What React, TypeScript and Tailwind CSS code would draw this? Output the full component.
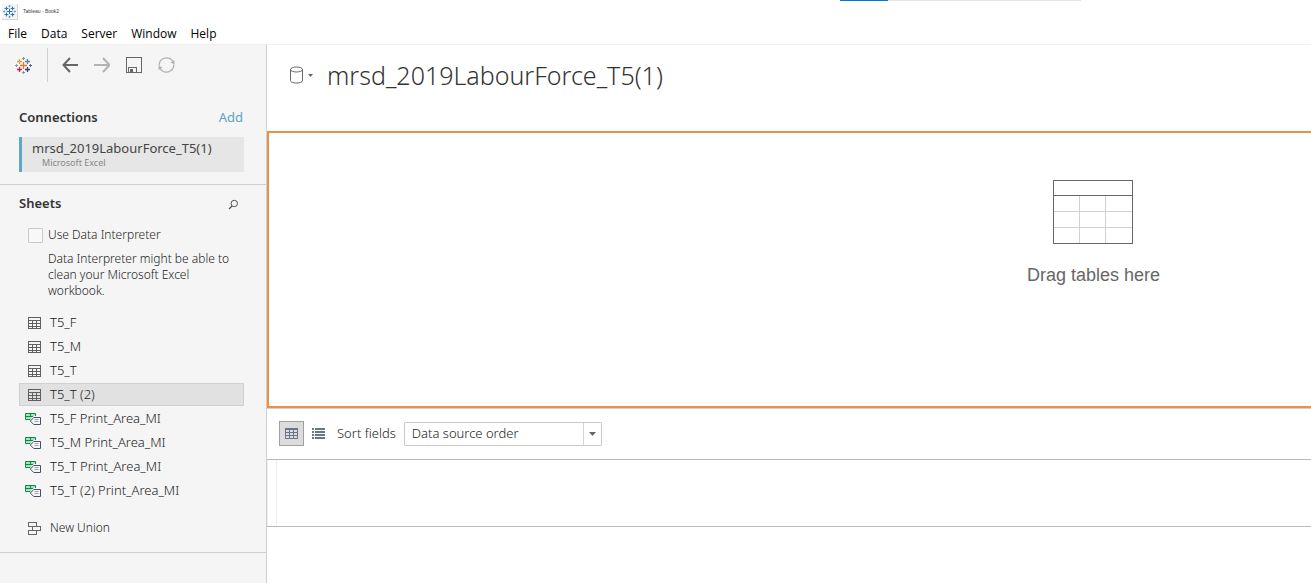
import React from "react";

const menus = ["File", "Data", "Server", "Window", "Help"];

const sheets = [
  { name: "T5_F", kind: "sheet" },
  { name: "T5_M", kind: "sheet" },
  { name: "T5_T", kind: "sheet" },
  { name: "T5_T (2)", kind: "sheet", selected: true },
  { name: "T5_F Print_Area_MI", kind: "range" },
  { name: "T5_M Print_Area_MI", kind: "range" },
  { name: "T5_T Print_Area_MI", kind: "range" },
  { name: "T5_T (2) Print_Area_MI", kind: "range" },
];

function TableauLogo({ colors, size }: { colors: string[]; size: number }) {
  const [center, tl, tr, bl, br, left, right, top, bottom] = colors;
  return (
    <svg width={size} height={size} viewBox="0 0 17 17" fill="none" aria-hidden="true">
      <path d="M8.5 5v7M5 8.5h7" stroke={center} strokeWidth="1.3" />
      <path d="M4.5 2v5M2 4.5h5" stroke={tl} strokeWidth="1.3" />
      <path d="M12.5 2v5M10 4.5h5" stroke={tr} strokeWidth="1.3" />
      <path d="M4.5 10v5M2 12.5h5" stroke={bl} strokeWidth="1.3" />
      <path d="M12.5 10v5M10 12.5h5" stroke={br} strokeWidth="1.3" />
      <path d="M1.5 7v3M0 8.5h3" stroke={left} />
      <path d="M15.5 7v3M14 8.5h3" stroke={right} />
      <path d="M8.5 0v3M7 1.5h3" stroke={top} />
      <path d="M8.5 14v3M7 15.5h3" stroke={bottom} />
    </svg>
  );
}

function SheetIcon() {
  return (
    <svg width="13" height="12" viewBox="0 0 13 12" fill="none" stroke="#5f5f5f" shapeRendering="crispEdges" aria-hidden="true">
      <path d="M.5 .5h12v11H.5zM0 3.5h13M0 6.5h13M0 9.5h13M4.5 3v9M8.5 3v9" />
    </svg>
  );
}

function RangeIcon() {
  return (
    <svg width="17" height="12" viewBox="0 0 17 12" fill="none" aria-hidden="true">
      <path d="M.5 .5h10v6H.5z" fill="#a5e6c0" stroke="#16824a" />
      <path d="M0 3.5h11M5.500 0v4" stroke="#16824a" />
      <path d="M8.500 3H17v9H8L4 8z" fill="#f5f5f5" />
      <path d="M8.800 4.500h6.700v7H8.800L5.300 8z" fill="#f8f8fa" stroke="#454f66" strokeLinejoin="round" />
      <path d="M9.500 6.500h4M9.500 8.500h4" stroke="#9aa0ac" />
    </svg>
  );
}

export default function App() {
  return (
    <div className="flex min-h-screen flex-col overflow-hidden bg-white font-['Noto_Sans',sans-serif] font-light text-[#222]">
      <div className="flex h-px justify-end pr-[230px]">
        <span className="w-12 bg-[#0078d7]" />
        <span className="w-[193px] bg-[#e5e5e5]" />
      </div>
      <header className="border-b border-[#f0f0f0]">
        <div className="flex h-[22px] items-center gap-[5px] pl-[2px]">
          <span className="flex size-4 items-center justify-center border-r border-b border-[#d5d5d5] bg-[#f3f5f7]">
            <TableauLogo
              size={13}
              colors={["#2674a8", "#2674a8", "#2674a8", "#2674a8", "#2674a8", "#5590b5", "#5590b5", "#5590b5", "#5590b5"]}
            />
          </span>
          <span className="font-['Liberation_Sans',sans-serif] text-[5px] font-normal text-[#444]">Tableau - Book2</span>
        </div>
        <nav className="flex h-[21px] items-center gap-[14px] pl-2 font-['Open_Sans',sans-serif] text-[12px] font-normal text-black">
          {menus.map((m) => (
            <button key={m} type="button">
              {m}
            </button>
          ))}
        </nav>
      </header>

      <div className="flex flex-1">
        <aside className="w-[267px] shrink-0 border-r border-[#d0d0d0] bg-[#f5f5f5]">
          <div className="flex h-10 items-center pl-[15px]">
            <button type="button" aria-label="Start page">
              <TableauLogo
                size={17}
                colors={["#e8762b", "#e8a33d", "#5b879b", "#c9203f", "#1f447e", "#6fa3b5", "#59659b", "#7199a6", "#8a93ad"]}
              />
            </button>
            <span className="ml-[15px] h-[34px] w-px bg-[#d0d0d0]" />
            <div className="flex items-center gap-4 pl-[14px]">
              <button type="button" aria-label="Back">
                <svg width="16" height="16" viewBox="0 0 16 16" fill="none" stroke="#666" strokeWidth="2" aria-hidden="true">
                  <path d="M16 8H1.500M8 1L1.500 8L8 15" />
                </svg>
              </button>
              <button type="button" aria-label="Forward">
                <svg width="16" height="16" viewBox="0 0 16 16" fill="none" stroke="#b3b3b3" strokeWidth="2" aria-hidden="true">
                  <path d="M0 8h15.500M9 1l6.500 7L9 15" />
                </svg>
              </button>
              <button type="button" aria-label="Save">
                <svg width="16" height="16" viewBox="0 0 16 16" fill="none" stroke="#666" shapeRendering="crispEdges" aria-hidden="true">
                  <path d="M.5 .5h15v15H.5zM2.500 15v-4.500h8V15" />
                  <path d="M4 12h3v3H4z" fill="#666" stroke="none" />
                </svg>
              </button>
              <button type="button" aria-label="Refresh">
                <svg width="17" height="16" viewBox="0 0 17 16" fill="none" stroke="#b3b3b3" strokeWidth="1.3" aria-hidden="true">
                  <path d="M1.200 8.500A7.300 7.300 0 0 1 15 5M15.800 7.500A7.300 7.300 0 0 1 2 11" />
                  <path d="M16.500 3v4.500l-4-2zM.5 13V8.500l4 2z" fill="#b3b3b3" stroke="none" />
                </svg>
              </button>
            </div>
          </div>

          <section className="border-b border-[#d0d0d0] pt-[23px] pr-[22px] pb-3 pl-[19px]">
            <div className="flex h-5 items-center justify-between pr-px">
              <h2 className="text-[13px] font-semibold text-[#333]">Connections</h2>
              <a href="#add" className="text-[13px] font-normal text-[#5fa2bf]">
                Add
              </a>
            </div>
            <button type="button" className="mt-[9px] flex h-[35px] w-full flex-col border-l-[3px] border-[#5fa6c8] bg-[#e6e6e6] pl-[10px] text-left">
              <span className="text-[13px] leading-[22px] font-normal text-[#444]">mrsd_2019LabourForce_T5(1)</span>
              <span className="pl-[10px] text-[9px] leading-[8px] font-normal text-[#888]">Microsoft Excel</span>
            </button>
          </section>

          <section className="border-b border-[#d0d0d0] pt-2 pr-[22px] pb-3 pl-[19px]">
            <div className="flex h-[22px] items-center justify-between pr-[5px]">
              <h2 className="text-[13px] font-semibold text-[#333]">Sheets</h2>
              <button type="button" aria-label="Search sheets">
                <svg width="11" height="11" viewBox="0 0 11 11" fill="none" stroke="#555" aria-hidden="true">
                  <circle cx="6.300" cy="4.500" r="3.200" />
                  <path d="M4 7L1 10" strokeWidth="1.300" />
                </svg>
              </button>
            </div>
            <label className="mt-[10px] flex h-5 items-center gap-[5px] pl-[9px] text-[12px]">
              <input type="checkbox" className="size-[15px] appearance-none rounded-[1px] border border-[#c9c9c9] bg-[#f8f8f8]" />
              Use Data Interpreter
            </label>
            <p className="mt-[6px] pl-[29px] text-[12px] leading-4">
              Data Interpreter might be able to clean your Microsoft Excel workbook.
            </p>
            <ul className="mt-[11px]">
              {sheets.map((s) => (
                <li key={s.name} className="pt-px">
                  <button
                    type="button"
                    className={
                      s.selected
                        ? "flex h-[23px] w-full items-center border border-[#d0d0d0] bg-[#e1e1e1] pl-[5px] text-[13px]"
                        : "flex h-[23px] w-full items-center border border-transparent pl-[5px] text-[13px]"
                    }
                  >
                    <span className={s.kind === "sheet" ? "w-[25px] pl-[3px]" : "w-[25px]"}>
                      {s.kind === "sheet" ? <SheetIcon /> : <RangeIcon />}
                    </span>
                    {s.name}
                  </button>
                </li>
              ))}
            </ul>
            <button type="button" className="mt-[14px] flex h-6 items-center gap-[9px] pl-[9px] text-[12px]">
              <svg width="13" height="13" viewBox="0 0 13 13" fill="none" stroke="#666" shapeRendering="crispEdges" aria-hidden="true">
                <path d="M.5 .5h8v4h-8zM4.500 4.500h8v4h-8zM.5 8.500h8v4h-8z" />
              </svg>
              New Union
            </button>
          </section>
        </aside>

        <main className="flex min-w-0 flex-1 flex-col">
          <div className="flex h-[86px] items-start pt-[13px] pl-[22px]">
            <button type="button" aria-label="Data source options" className="mt-2 flex items-center gap-1">
              <svg width="15" height="18" viewBox="0 0 15 18" fill="none" stroke="#666" aria-hidden="true">
                <path d="M1.500 3.500v11c0 1.600 2.500 2.500 6 2.500s6-.9 6-2.500v-11" />
                <ellipse cx="7.500" cy="3.500" rx="6" ry="2.500" />
              </svg>
              <svg width="5" height="3" viewBox="0 0 5 3" aria-hidden="true">
                <path d="M0 0h5L2.500 3z" fill="#666" />
              </svg>
            </button>
            <h1 className="ml-[14px] text-[25px] leading-[34px] text-[#333]">mrsd_2019LabourForce_T5(1)</h1>
          </div>

          <div className="flex h-[277px] justify-end border-2 border-r-0 border-[#eb9048] pt-[47px] pr-[151px]">
            <div className="flex flex-col items-center">
              <svg width="80" height="64" viewBox="0 0 80 64" fill="none" shapeRendering="crispEdges" aria-hidden="true">
                <path d="M1 31.500h78M1 47.500h78M26.500 16v47M52.500 16v47" stroke="#d0d0d0" />
                <path d="M.5 .5h79v63H.5zM1 15.500h78" stroke="#666" />
              </svg>
              <p className="mt-[17px] font-['Liberation_Sans',sans-serif] text-[18px] leading-7 font-normal text-[#666]">Drag tables here</p>
            </div>
          </div>

          <div className="flex h-[52px] items-center border-t border-b border-t-[#d0d0d0] border-b-[#bbb] pb-px pl-3">
            <button type="button" aria-label="Grid view" className="flex size-[25px] items-center justify-center border border-[#a0a0a0] bg-[#dcdcdc]">
              <svg width="13" height="11" viewBox="0 0 13 11" fill="none" stroke="#6b7589" shapeRendering="crispEdges" aria-hidden="true">
                <path d="M.5 1v9.500h12V1M4.500 1v9M8.500 1v9M0 4.500h13M0 7.500h13" />
                <path d="M0 1h13" strokeWidth="2" />
              </svg>
            </button>
            <button type="button" aria-label="List view" className="ml-2">
              <svg width="13" height="11" viewBox="0 0 13 11" fill="#6b7589" shapeRendering="crispEdges" aria-hidden="true">
                <path d="M0 0h2v2H0zM0 3h2v2H0zM0 6h2v2H0zM0 9h2v2H0zM3 0h10v2H3zM3 3h10v2H3zM3 6h10v2H3zM3 9h10v2H3z" />
              </svg>
            </button>
            <label htmlFor="sort" className="ml-3 text-[13px]">
              Sort fields
            </label>
            <div className="relative ml-2">
              <select
                id="sort"
                className="block h-6 w-[198px] appearance-none rounded-[1px] border border-[#c9c9c9] bg-white pl-[7px] text-[13px]"
              >
                <option>Data source order</option>
              </select>
              <span className="pointer-events-none absolute inset-y-px right-px flex w-[18px] items-center justify-center border-l border-[#d5d5d5]">
                <svg width="7" height="4" viewBox="0 0 7 4" aria-hidden="true">
                  <path d="M0 0h7L3.500 4z" fill="#666" />
                </svg>
              </span>
            </div>
          </div>

          <div className="flex h-[67px] border-b border-[#bbb]">
            <span className="w-[10px] border-r border-l border-[#eee]" />
          </div>
        </main>
      </div>
    </div>
  );
}
